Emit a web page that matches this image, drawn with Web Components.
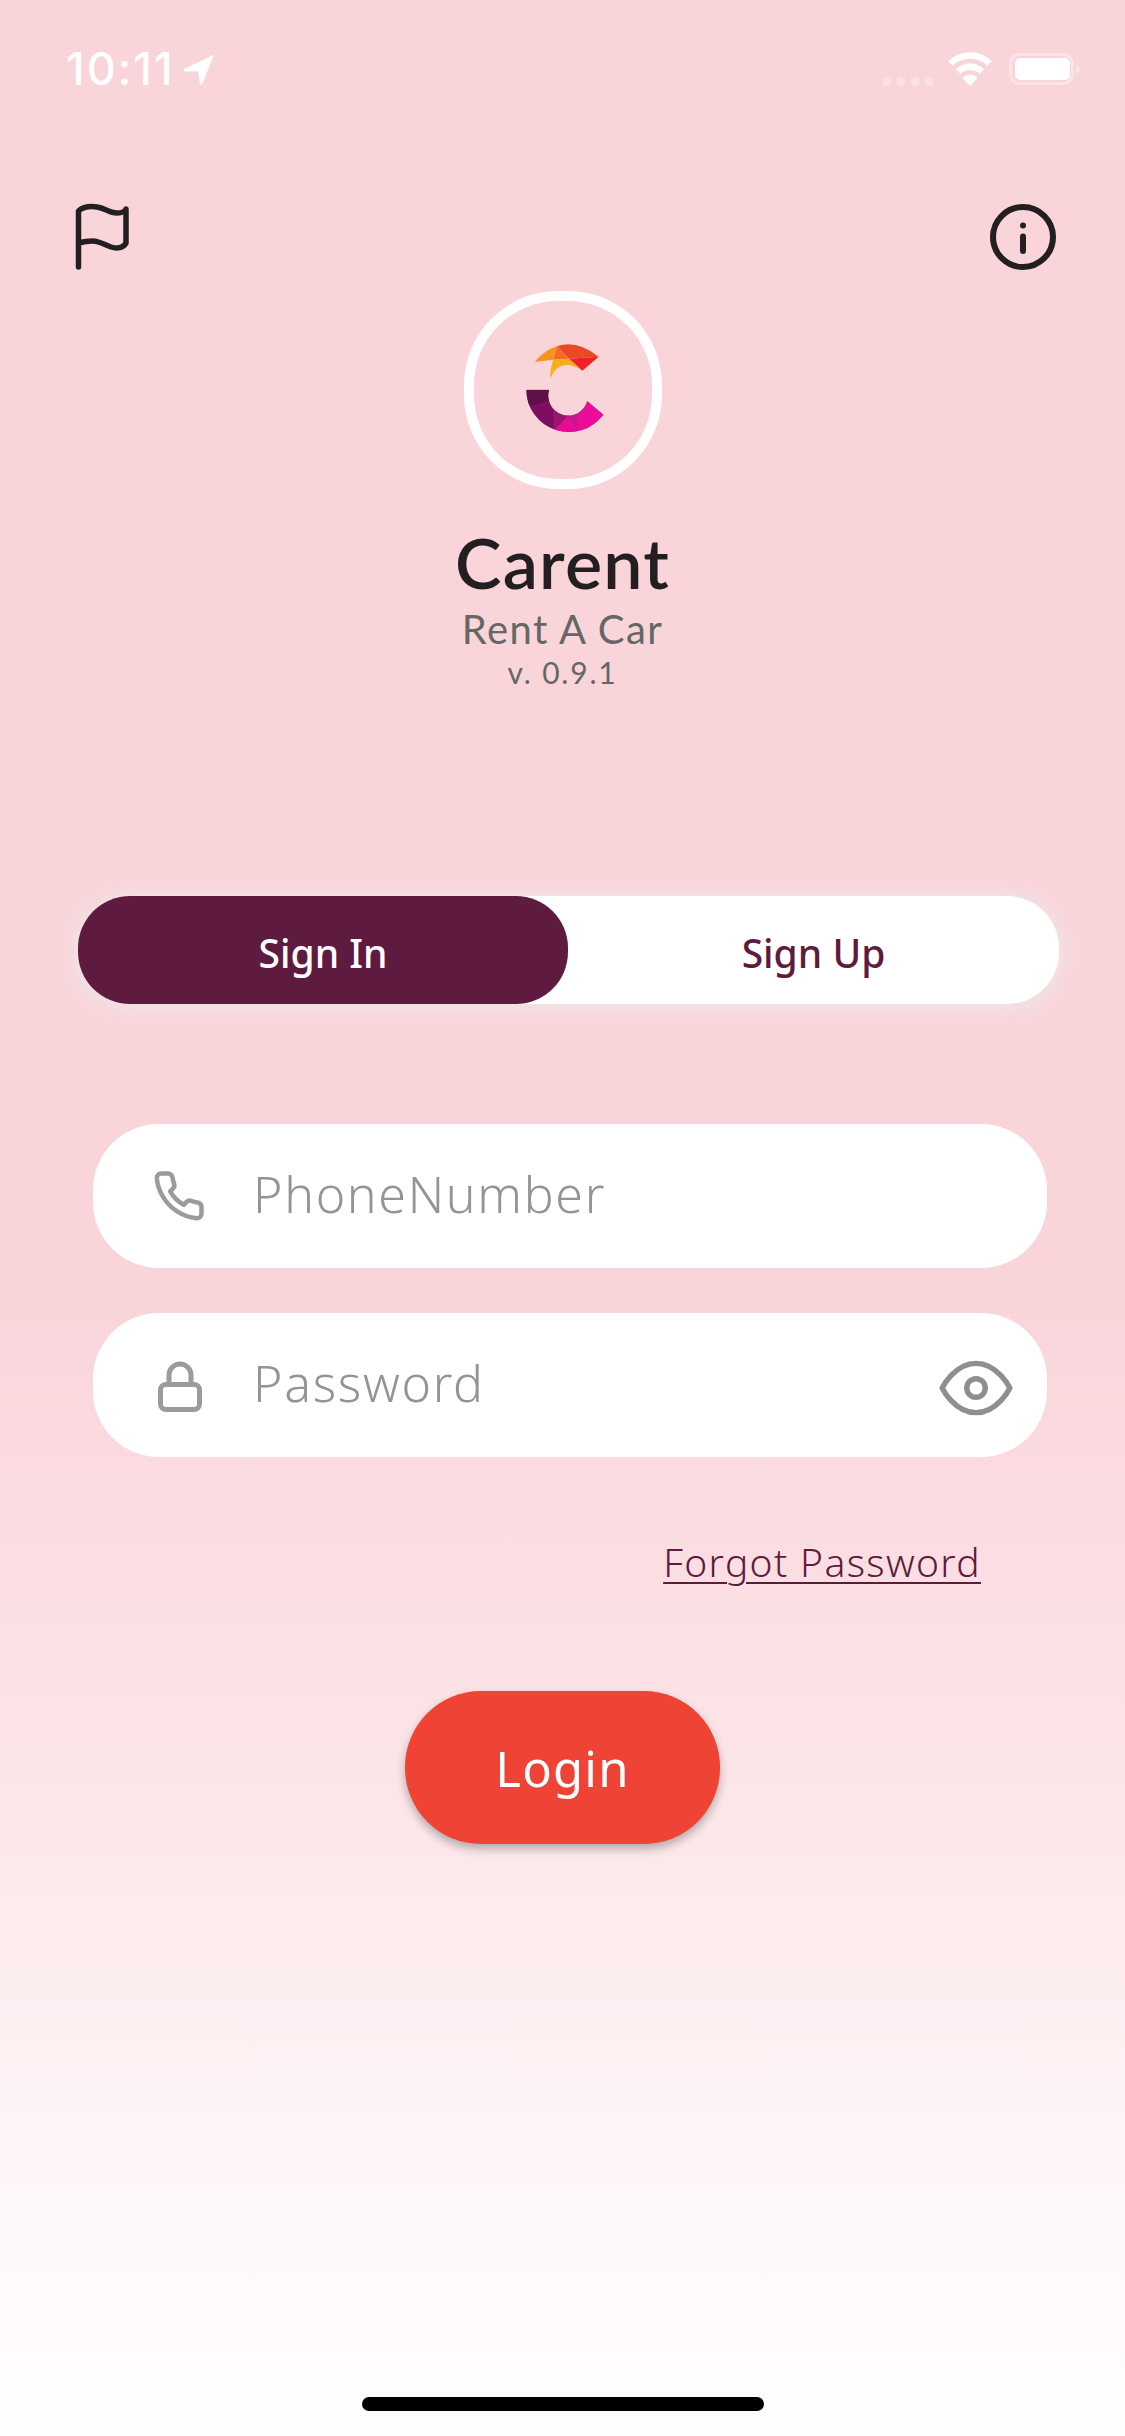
<!DOCTYPE html>
<html><head><meta charset="utf-8"><style>
html,body{margin:0;padding:0;width:1125px;height:2436px;overflow:hidden}
body{font-family:"Noto Sans","Open Sans",sans-serif}
</style></head><body>
<app-screen>
  <status-bar></status-bar>
  <top-actions></top-actions>
  <brand-block></brand-block>
  <auth-toggle></auth-toggle>
  <field-input label="PhoneNumber" icon="phone" style="margin-top:120px"></field-input>
  <field-input label="Password" icon="lock" eye style="margin-top:45px"></field-input>
  <forgot-link>Forgot Password</forgot-link>
  <primary-button>Login</primary-button>
  <home-indicator></home-indicator>
</app-screen>
<script>
function def(name,html,setup){
  customElements.define(name,class extends HTMLElement{
    constructor(){super();const r=this.attachShadow({mode:'open'});r.innerHTML=html;}
    connectedCallback(){if(setup)setup(this,this.shadowRoot);}
  });
}
def('app-screen',`<style>:host{display:flex;flex-direction:column;width:1125px;height:2436px;
background:linear-gradient(180deg,#f9d5da 0,#f9d5da 1300px,#fce6e9 1800px,#fdf3f4 2100px,#fffdfc 2390px,#fffdfc 100%);overflow:hidden}</style><slot></slot>`);

def('status-bar',`<style>:host{display:flex;align-items:flex-start;height:128px;box-sizing:border-box;padding:0 44px 0 66px;color:#fff}
.t{font:500 45px/45px Inter,"Liberation Sans",sans-serif;margin-top:46px;letter-spacing:2px;color:#fff;width:104px;white-space:nowrap}
.a{margin:54px 0 0 13px}.r{margin-left:auto;display:flex;align-items:flex-start;padding-top:52px}
</style>
<span class="t">10:11</span>
<svg class="a" width="32" height="31" viewBox="0 0 32 31"><path d="M31 0.5 L0.5 15.5 Q0 17 2 17.5 L15 17.5 L17 30 Q18 31 19.5 29.5 Z" fill="#fff"/></svg>
<div class="r">
<svg width="50" height="10" style="margin-top:25px;opacity:.28" viewBox="0 0 50 10" fill="#fff"><rect x="0" y="0" width="8" height="9" rx="3"/><rect x="14" y="0" width="8" height="9" rx="3"/><rect x="28" y="0" width="8" height="9" rx="3"/><rect x="42" y="0" width="8" height="9" rx="3"/></svg>
<svg width="46" height="36" style="margin:0 0 0 14px" viewBox="0 0 46 36"><g fill="none" stroke="#fff" stroke-width="6.5"><path d="M3.5 11.5 A28 28 0 0 1 42.5 11.5"/><path d="M11 19.5 A17.5 17.5 0 0 1 35 19.5"/></g><path d="M15.5 26 A10.5 10.5 0 0 1 30.5 26 L23 34 Z" fill="#fff"/></svg>
<svg width="72" height="36" style="margin:0 0 0 16px" viewBox="0 0 72 36"><rect x="1.5" y="2.5" width="62" height="29" rx="9" fill="none" stroke="#fff" stroke-opacity=".35" stroke-width="3"/><rect x="6" y="6" width="55" height="22" rx="5" fill="#fff"/><path d="M67 11.5 Q70.5 13 70.5 17 Q70.5 21 67 22.5 Z" fill="#fff" fill-opacity=".4"/></svg>
</div>`);

def('top-actions',`<style>:host{display:flex;justify-content:space-between;align-items:flex-start;height:72px;padding:0 66px 0 73px;margin-top:74px}</style>
<svg width="60" height="70" viewBox="0 0 60 70" fill="none" stroke="#231f20" stroke-width="5.5" stroke-linecap="round" stroke-linejoin="round"><path d="M5.5 65 V9 C10 5 17 4 24 5 C32 6 36 11 44 11 C48 11 52 9.5 53 7 V41 C50 46 44 47 38 45 C32 43 26 39 20 39 C14 39 9 40 5.5 41"/></svg>
<svg width="72" height="72" viewBox="0 0 72 72" style="margin-top:-1px" fill="none" stroke="#231f20" stroke-width="6" stroke-linecap="round"><circle cx="36" cy="36" r="30"/><path d="M36 35.5 V50"/><circle cx="36" cy="24.5" r="1.5" fill="#231f20" stroke-width="3"/></svg>`);

def('brand-block',`<style>:host{display:flex;flex-direction:column;align-items:center;margin-top:17px;font-family:Lato,"Noto Sans",sans-serif}
.ring{width:198px;height:198px;box-sizing:border-box;border:10px solid #fff;border-radius:94px;display:flex;align-items:center;justify-content:center}
.n{font-size:70px;line-height:80px;font-weight:600;color:#231f20;margin-top:33px;letter-spacing:1.2px}
.s{font-size:40px;line-height:44px;color:#666;font-weight:400;margin-top:5px;letter-spacing:1.4px}
.v{font-size:30px;line-height:36px;color:#666;font-weight:400;margin-top:3px;letter-spacing:1.8px}
svg{display:block}
</style>
<div class="ring">
<svg width="120" height="120" viewBox="130 130 360 360" style="margin:3px 0 0 3px">
<defs><clipPath id="band"><path d="M197 303 H265 A60 60 0 0 0 380 338 L428 378 A128 128 0 0 1 197 303 Z"/></clipPath></defs>
<path d="M222 220 Q250 185 290 172 L278 213 Z" fill="#f7941d"/>
<path d="M290 172 L325 210 L278 213 Z" fill="#f26a23"/>
<path d="M290 172 Q350 153 414 204 L325 210 Z" fill="#ea4a23"/>
<path d="M414 204 L365 246 L325 210 Z" fill="#f1202b"/>
<path d="M278 213 L325 210 L365 246 Q330 222 300 232 Q280 243 268 270 Q268 240 278 213 Z" fill="#fbad18"/>
<g clip-path="url(#band)">
<rect x="190" y="295" width="250" height="145" fill="#c2198c"/>
<path d="M190 295 H275 V340 L282 420 L270 440 H190 Z" fill="#7d0f60"/>
<path d="M190 295 H275 L272 335 L205 352 L190 352 Z" fill="#5c1148"/>
<path d="M272 335 L320 385 L285 420 Z" fill="#9a1572"/>
<path d="M272 335 L330 362 L382 336 L320 385 Z" fill="#a9246f"/>
<path d="M285 420 L320 385 L365 440 H280 Z" fill="#e60c96"/>
<path d="M380 336 L430 378 L360 435 L345 395 Z" fill="#ec0c9a"/>
</g>
</svg></div>
<div class="n">Carent</div><div class="s">Rent A Car</div><div class="v">v. 0.9.1</div>`);

def('auth-toggle',`<style>:host{display:flex;width:981px;height:108px;margin:206px 0 0 78px;background:#fff;border-radius:52px;box-shadow:0 2px 24px rgba(235,238,238,.85);font-weight:500;font-size:39px}
.i{width:490px;background:#5f1a40;color:#fff;border-radius:52px;display:flex;align-items:center;justify-content:center;padding-top:5px;box-sizing:border-box}
.u{flex:1;color:#5f1a40;display:flex;align-items:center;justify-content:center;padding-top:5px}
</style><div class="i">Sign In</div><div class="u">Sign Up</div>`);

def('field-input',`<style>:host{display:flex;align-items:center;width:954px;height:144px;margin-left:93px;background:#fff;border-radius:66px;color:#949494;font-size:50px;position:relative}
.ic{width:160px;display:flex;justify-content:flex-start;padding-left:60px;box-sizing:border-box}
.tx{margin-top:-4px;font-weight:300;letter-spacing:1.7px}
.eye{margin-left:auto;margin-right:34px;margin-top:5px}
svg{display:block}
</style><span class="ic"></span><span class="tx"></span>`,(el,r)=>{
  r.querySelector('.tx').textContent=el.getAttribute('label');
  const phone=`<svg width="54" height="54" viewBox="0 0 24 24" fill="none" stroke="#9b9b9b" stroke-width="2" stroke-linejoin="round" stroke-linecap="round" style="margin-left:-1px"><path d="M22 16.92v3a2 2 0 0 1-2.18 2 19.79 19.79 0 0 1-8.63-3.07 19.5 19.5 0 0 1-6-6 19.79 19.79 0 0 1-3.07-8.67A2 2 0 0 1 4.11 2h3a2 2 0 0 1 2 1.72 12.84 12.84 0 0 0 .7 2.81 2 2 0 0 1-.45 2.11L8.09 9.91a16 16 0 0 0 6 6l1.27-1.27a2 2 0 0 1 2.11-.45 12.84 12.84 0 0 0 2.81.7A2 2 0 0 1 22 16.92z"/></svg>`;
  const lock=`<svg width="50" height="54" viewBox="0 0 50 54" fill="none" stroke="#9b9b9b" stroke-width="5" stroke-linecap="round" stroke-linejoin="round" style="margin:3px 0 0 2px"><rect x="5.5" y="24.5" width="39" height="25" rx="5.5"/><path d="M14 24 V15 A11 11 0 0 1 36 15 V24"/></svg>`;
  r.querySelector('.ic').innerHTML=el.getAttribute('icon')==='phone'?phone:lock;
  if(el.hasAttribute('eye')){
    const d=document.createElement('span');d.className='eye';
    d.innerHTML=`<svg width="74" height="56" viewBox="0 0 24 18" fill="none" stroke="#8f8f8f" stroke-width="1.75" stroke-linecap="round" stroke-linejoin="round"><path d="M1 9s4-8 11-8 11 8 11 8-4 8-11 8-11-8-11-8z"/><circle cx="12" cy="9" r="3"/></svg>`;
    r.appendChild(d);
  }
});

def('forgot-link',`<style>:host{display:flex;justify-content:flex-end;margin:79px 144px 0 0;height:52px;color:#5f1a40;font-size:39px;line-height:52px;font-weight:300}
span{text-decoration:underline;text-decoration-thickness:2px;text-underline-offset:5px;letter-spacing:1.35px}
</style><span><slot></slot></span>`);

def('primary-button',`<style>:host{display:flex;align-items:center;justify-content:center;align-self:flex-start;width:315px;height:153px;margin:103px 0 0 405px;background:#ee4335;border-radius:76px;color:#fff;font-size:49px;box-shadow:0 5px 10px rgba(0,0,0,.28)}
span{margin-top:0;font-weight:400;letter-spacing:1.2px}
</style><span><slot></slot></span>`);

def('home-indicator',`<style>:host{display:block;width:402px;height:14px;margin:auto 0 25px 362px;background:#000;border-radius:7px}</style>`);
</script>
</body></html>
